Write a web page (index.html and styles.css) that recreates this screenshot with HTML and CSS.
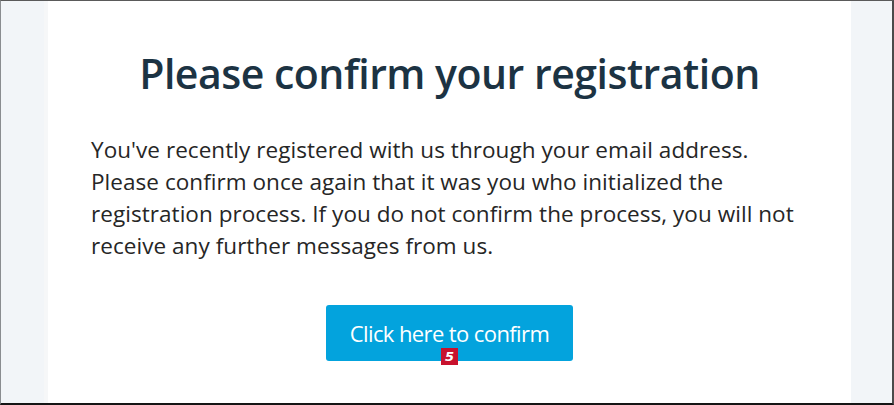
FILE: index.html
```html
<!DOCTYPE html>
<html lang="en">
<head>
<meta charset="utf-8">
<title>Please confirm your registration</title>
<link rel="stylesheet" href="styles.css">
</head>
<body>
<div class="frame">
  <main class="card">
    <h1 class="title">Please confirm your registration</h1>
    <p class="message">You've recently registered with us through your email address. Please confirm once again that it was you who initialized the registration process. If you do not confirm the process, you will not receive any further messages from us.</p>
    <div class="actions">
      <a class="confirm-btn" href="#">Click here to confirm<span class="badge">5</span></a>
    </div>
  </main>
</div>
</body>
</html>
```
FILE: styles.css
```css
* { box-sizing: border-box; }
html, body { margin: 0; padding: 0; }
body {
  width: 894px;
  height: 405px;
  overflow: hidden;
  font-family: "Open Sans", "Noto Sans", sans-serif;
}
.frame {
  height: 405px;
  border-top: 1px solid #5a5a5a;
  border-left: 1px solid #8a8d90;
  border-right: 2px solid #4a4a4a;
  border-bottom: 2px solid #151515;
  background: #f2f5f8;
  padding: 0 41px 0 47px;
  display: flex;
}
.card {
  flex: 1;
  background: #ffffff;
  box-shadow: -4px 0 0 #f6f7f8;
  padding: 44px 0 0 43px;
}
.title {
  margin: 0;
  padding-right: 43px;
  text-align: center;
  font-size: 41px;
  font-weight: 600;
  letter-spacing: -0.5px;
  color: #1c3343;
  line-height: 56px;
}
.message {
  margin: 33px 0 0 0;
  width: 716px;
  font-size: 22.5px;
  letter-spacing: 0.05px;
  line-height: 32px;
  color: #262626;
}
.actions {
  margin-top: 43px;
  display: flex;
  justify-content: center;
  padding-right: 43px;
}
.confirm-btn {
  position: relative;
  display: block;
  width: 247px;
  height: 56px;
  background: #03a3dd;
  border-radius: 3px;
  color: #ffffff;
  text-decoration: none;
  font-size: 22px;
  letter-spacing: -0.6px;
  line-height: 56px;
  text-align: center;
}
.badge {
  position: absolute;
  left: 115px;
  top: 43px;
  width: 17px;
  height: 17px;
  background: #c8122e;
  color: #ffffff;
  font-family: "DejaVu Sans", sans-serif;
  font-weight: bold;
  font-style: italic;
  font-size: 13px;
  line-height: 17px;
  letter-spacing: 0;
  text-align: center;
}
```
